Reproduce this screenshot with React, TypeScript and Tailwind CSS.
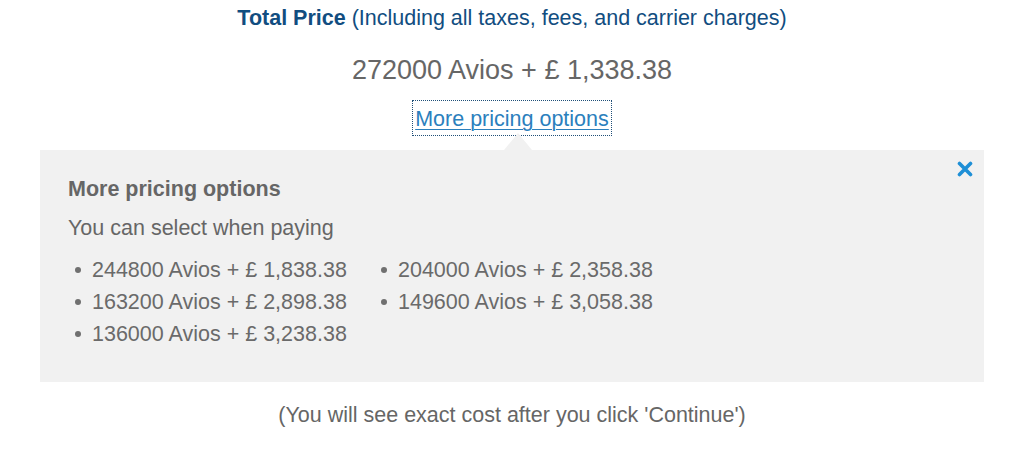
import React from "react";

const options: [string, string][] = [
  ["244800 Avios + £ 1,838.38", "204000 Avios + £ 2,358.38"],
  ["163200 Avios + £ 2,898.38", "149600 Avios + £ 3,058.38"],
  ["136000 Avios + £ 3,238.38", ""],
];

function Item({ text }: { text: string }) {
  if (!text) return <div />;
  return (
    <div className="flex items-center h-8">
      <span className="w-[6px] h-[6px] rounded-full bg-[#707070] ml-[7px] mr-[11px]" />
      <span>{text}</span>
    </div>
  );
}

export default function App() {
  return (
    <div
      className="w-[1024px] h-[450px] bg-white flex flex-col items-center overflow-hidden"
      style={{ fontFamily: '"Liberation Sans", Arial, sans-serif' }}
    >
      <div className="pt-[6px] text-[21.5px] leading-6 text-[#114d80]">
        <span className="font-bold">Total Price</span> (Including all taxes, fees, and carrier charges)
      </div>
      <div className="mt-[25px] text-[27px] leading-[30px] text-[#666666]">
        272000 Avios + £ 1,338.38
      </div>
      <div className="mt-[15px] border border-dotted border-[#1f4f78] px-[2px] pt-[6px] pb-[4px] text-[21.5px] leading-6 text-[#2b80bd] underline decoration-1 underline-offset-[3px]">
        More pricing options
      </div>
      <div className="relative w-[944px] mt-[14px]">
        <div className="absolute left-[464px] -top-[17px] w-0 h-0 border-l-[14px] border-r-[14px] border-b-[17px] border-l-transparent border-r-transparent border-b-[#f1f1f1]" />
        <div className="bg-[#f1f1f1] pl-[28px] pt-[27px] pb-[32px] text-[#666666]">
          <div className="text-[21.5px] leading-6 font-bold">More pricing options</div>
          <div className="mt-[15px] text-[21.5px] leading-6">You can select when paying</div>
          <div className="mt-[14px] grid grid-cols-[306px_auto] text-[21.5px] text-[#6a6a6a]">
            {options.map(([a, b], i) => (
              <React.Fragment key={i}>
                <Item text={a} />
                <Item text={b} />
              </React.Fragment>
            ))}
          </div>
          <svg
            className="absolute right-[11px] top-[11px]"
            width="16"
            height="16"
            viewBox="0 0 16 16"
          >
            <path
              d="M2.5 2.5 L13.5 13.5 M13.5 2.5 L2.5 13.5"
              stroke="#1e8fd6"
              strokeWidth="3.6"
              strokeLinecap="round"
            />
          </svg>
        </div>
      </div>
      <div className="mt-[21px] text-[21.5px] leading-6 text-[#666666]">
        (You will see exact cost after you click 'Continue')
      </div>
    </div>
  );
}
